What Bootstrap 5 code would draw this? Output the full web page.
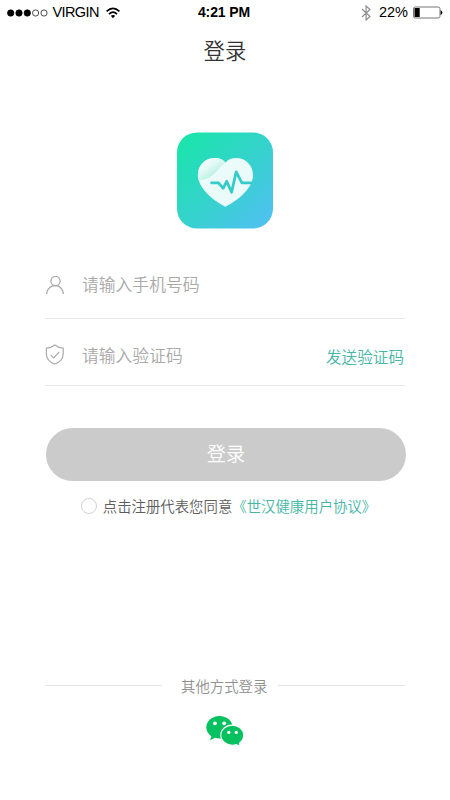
<!DOCTYPE html>
<html lang="zh-CN">
<head>
<meta charset="utf-8">
<meta name="viewport" content="width=device-width, initial-scale=1">
<title>登录</title>
<link href="https://cdn.jsdelivr.net/npm/bootstrap@5.3.0/dist/css/bootstrap.min.css" rel="stylesheet">
<style>
  body { font-family: "Noto Sans CJK SC", sans-serif; font-weight: 350; color: #333; }
  svg { display: block; flex: none; }
  .screen { width: 450px; height: 800px; }
  .status-bar { height: 25px; padding: 0 7px; font: 400 14.5px/25px "Liberation Sans", Arial, sans-serif; color: #000; }
  .status-bar .carrier { margin-left: 4.5px; letter-spacing: -.6px; }
  .status-bar .wifi { margin-left: 7px; }
  .status-bar .clock { font-weight: 700; font-size: 14px; letter-spacing: -.1px; margin-right: 2px; }
  .page-title { font-size: 21.4px; line-height: 49px; height: 50px; font-weight: 350; }
  .app-logo { margin-top: 57px; }
  .form-area { padding: 0 45px; }
  .field { border-bottom: 1px solid #e9e9e9; }
  .field-phone { height: 67px; margin-top: 22.5px; padding-bottom: 1px; }
  .field-code { height: 67px; padding-top: 6px; }
  .field input { font-size: 16.8px; font-weight: 350; line-height: 24px; color: #333; outline: 0; margin-left: 18px; min-width: 0; }
  .field input::placeholder { color: #a9a9a9; opacity: 1; }
  .send-code { font-size: 15.6px; font-weight: 350; line-height: 24px; color: #45b5a5; margin: 3px 1px 0 0; }
  .login-btn { height: 53px; margin: 42px 0 0 .5px; padding: 0 0 0 1px; font-size: 19.2px; line-height: 1; font-weight: 350; color: #fff; background: #cbcbcb; }
  .agreement { margin: 13px 0 0 7px; font-size: 14.4px; line-height: 24px; color: #5c5c5c; }
  .agreement input { appearance: none; width: 16px; height: 16px; border: 1px solid #d2d2d2; border-radius: 50%; margin: 0 6px 0 0; }
  .agreement a { color: #45b5a5; }
  .other { margin-top: 156px; font-size: 14.4px; line-height: 24px; color: #909090; }
  .rule { height: 1px; background: #e4e6e4; }
  .rule-left { width: 117px; margin-right: 19px; }
  .rule-right { margin-left: 10.5px; }
  .wechat { margin-top: 18px; }
</style>
</head>
<body class="bg-white">
<main class="screen d-flex flex-column overflow-hidden">
  <header class="status-bar row g-0 align-items-center">
    <div class="col d-flex align-items-center">
      <svg width="41" height="8" viewBox="0 0 41 8"><g stroke="#000" stroke-width=".7"><circle cx="3.7" cy="4" r="3.2"/><circle cx="12" cy="4" r="3.2"/><circle cx="20.3" cy="4" r="3.2"/><circle cx="28.6" cy="4" r="3.1" fill="none"/><circle cx="37" cy="4" r="3.1" fill="none"/></g></svg>
      <span class="carrier">VIRGIN</span>
      <svg class="wifi" width="14" height="12" viewBox="0 0 14 12"><g fill="none" stroke="#000" stroke-width="1.7"><path d="M.6 4.4Q7-1.8 13.4 4.4"/><path d="M3 7.1Q7 3.2 11 7.1"/></g><path d="M4.8 8.8Q7 7 9.2 8.8L7 11.2Z"/></svg>
    </div>
    <div class="col-auto clock">4:21 PM</div>
    <div class="col d-flex align-items-center justify-content-end">
      <svg width="10" height="16" viewBox="0 0 10 16"><path d="M1 4l8 7.5L5.1 15V1L9 4.5 1 12" fill="none" stroke="#8e8e8e" stroke-width="1.2"/></svg>
      <span class="ms-2">22%</span>
      <svg class="ms-1" width="31" height="13" viewBox="0 0 31 13"><rect x="1.5" y="1" width="26.5" height="11" rx="1.8" fill="none" stroke="#777"/><rect x="2.5" y="2" width="5.2" height="9"/><path d="M28.6 4q1.8 1 1.8 2.5T28.6 9z"/></svg>
    </div>
  </header>
  <h1 class="page-title text-center mb-0">登录</h1>

  <svg class="app-logo align-self-center" width="96" height="97" viewBox="0 0 96 97">
    <defs>
      <linearGradient id="tile" x1="0" y1="0" x2="1" y2="1"><stop offset=".08" stop-color="#1be4ac"/><stop offset=".5" stop-color="#34d3cb"/><stop offset="1" stop-color="#52bff5"/></linearGradient>
      <linearGradient id="shine" gradientUnits="userSpaceOnUse" x1="26" y1="30" x2="37" y2="46"><stop offset="0" stop-color="#f3fdfa"/><stop offset=".4" stop-color="#e2f9f4"/><stop offset="1" stop-color="#aeeee2"/></linearGradient>
    </defs>
    <rect y=".5" width="96" height="96" rx="20" fill="url(#tile)"/>
    <path d="M48.4 74.8C46.5 74 21 60.5 21 43.3 21 33.4 28.5 26.1 37.7 26.1c4.5 0 8.3 1.5 10.8 4.3 2.5-2.8 6.3-4.3 10.8-4.3 9.2 0 16.7 7.3 16.7 17.2 0 17.2-25.7 30.7-27.6 31.5Z" fill="#eafbfa"/>
    <path d="M21.6 48.3C18.5 36.5 26.3 26.1 37.7 26.1c4.5 0 8.2 1.5 10.7 4.3C41 35 38 47 21.6 48.3Z" fill="url(#shine)"/>
    <path d="M34.6 50.8h6.9l4.7 5.5 3.5-7 4.9 11 4.6-20.4 5.7 10.9h9" fill="none" stroke="#35cbc9" stroke-width="2.8" stroke-linecap="round" stroke-linejoin="round"/>
  </svg>

  <form class="form-area d-flex flex-column">
    <div class="field field-phone d-flex align-items-center">
      <svg class="mt-1" width="19" height="20" viewBox="0 0 19 20"><g fill="none" stroke="#aaa" stroke-width="1.3"><circle cx="10.5" cy="5" r="4.6"/><path d="M1.6 18C1.8 13 5.6 9.7 10.1 9.7S18.2 13 18.4 18"/></g></svg>
      <input class="border-0 p-0 bg-transparent flex-grow-1" type="tel" placeholder="请输入手机号码" aria-label="手机号码">
    </div>
    <div class="field field-code d-flex align-items-center">
      <svg width="19" height="21" viewBox="0 0 19 21"><g fill="none" stroke="#aaa" stroke-width="1.2"><path d="M9.8 1Q13.2 3.8 18.2 4.2V10q0 7-8.4 10Q1.4 17 1.4 10V4.2q4.9-.4 8.4-3.2Z"/><path d="M5.6 10.8l3 3L14.2 8"/></g></svg>
      <input class="border-0 p-0 bg-transparent flex-grow-1" type="text" placeholder="请输入验证码" aria-label="验证码">
      <button class="send-code btn border-0 p-0 text-nowrap" type="button">发送验证码</button>
    </div>
    <button class="login-btn btn border-0 rounded-pill w-100" type="button">登录</button>
    <label class="agreement d-flex align-items-center justify-content-center text-nowrap">
      <input type="checkbox"><span>点击注册代表您同意<a class="text-decoration-none" href="#">《世汉健康用户协议》</a></span>
    </label>
    <div class="other d-flex align-items-center">
      <div class="rule rule-left"></div><span>其他方式登录</span><div class="rule rule-right flex-grow-1"></div>
    </div>
  </form>
  <svg class="wechat align-self-center" width="38" height="32" viewBox="0 0 38 32" role="img" aria-label="微信">
    <path d="M13.5 0C6.2 0 .3 5 .3 11.3c0 3.7 2 6.9 5.1 8.9L4 24.2l5-2.5c1.4.5 3 .7 4.5.7 7.3 0 13.2-4.9 13.2-11.1S20.8 0 13.5 0Z" fill="#07c160"/>
    <path d="M26.3 9.1c-6.3 0-11.5 4.4-11.5 10S20 29.2 26.3 29.2c1.5 0 2.9-.2 4.1-.6l3.8 1.9-.7-3.4c2.7-1.8 4.2-4.6 4.2-8 0-5.6-5.1-10-11.4-10Z" fill="#07c160" stroke="#fff" stroke-width="1.1"/>
    <g fill="#fff"><circle cx="9" cy="7.3" r="1.9"/><circle cx="18.2" cy="7.3" r="1.9"/><circle cx="22.8" cy="16.4" r="1.6"/><circle cx="30.2" cy="16.4" r="1.6"/></g>
  </svg>
</main>
<script src="https://cdn.jsdelivr.net/npm/bootstrap@5.3.0/dist/js/bootstrap.bundle.min.js"></script>
</body>
</html>
